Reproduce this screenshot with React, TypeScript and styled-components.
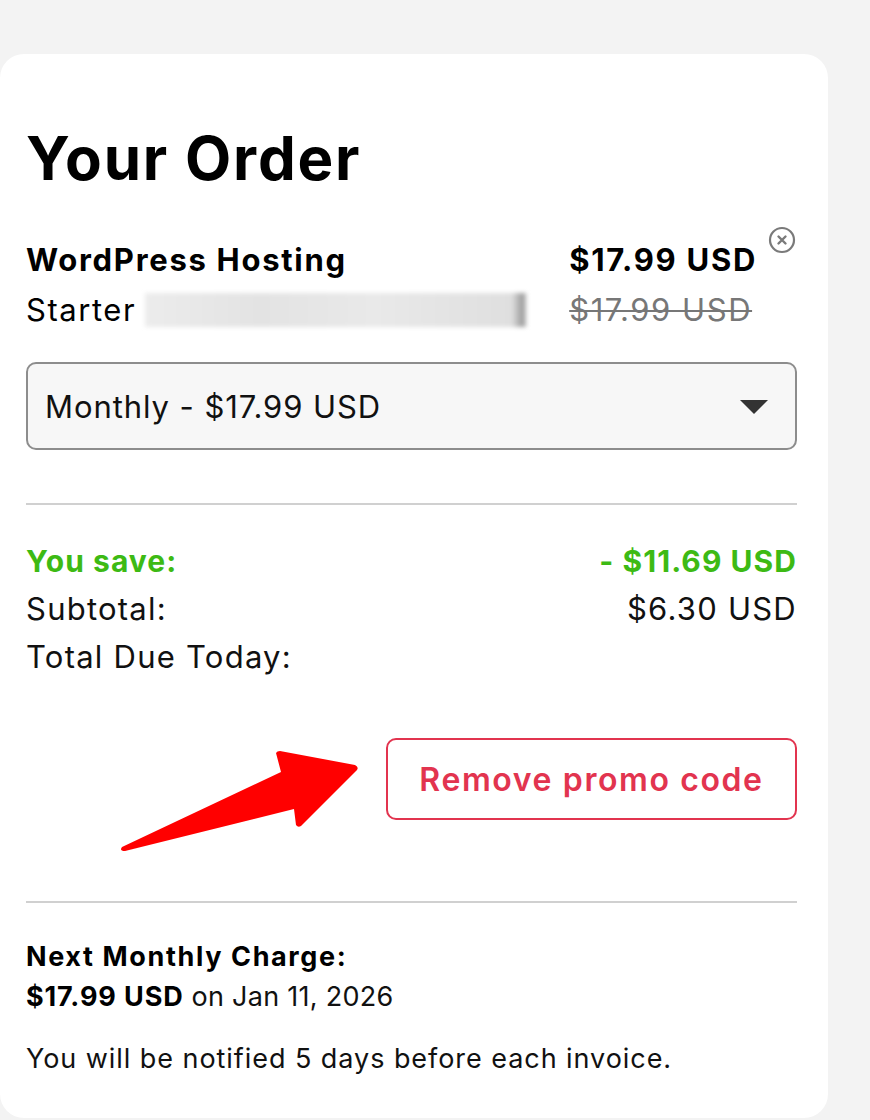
import React from "react";
import styled, { createGlobalStyle } from "styled-components";

const GlobalStyle = createGlobalStyle`
  html, body {
    margin: 0;
    padding: 0;
    background: #f3f3f3;
  }
  body {
    font-family: Inter, "Open Sans", sans-serif;
    color: #111;
    overflow: hidden;
  }
  * { box-sizing: border-box; }
`;

const Page = styled.div`
  width: 870px;
  height: 1120px;
  padding-top: 54px;
  overflow: hidden;
`;

const Card = styled.section`
  position: relative;
  width: 828px;
  height: 1064px;
  background: #ffffff;
  border-radius: 24px;
  padding: 0 31px 0 26px;
`;

const Title = styled.h1`
  margin: 0;
  padding-top: 74px;
  font-size: 60px;
  line-height: 60px;
  font-weight: 700;
  letter-spacing: 0.03em;
  color: #000;
`;

const ItemRow = styled.div`
  display: flex;
  justify-content: space-between;
  align-items: flex-start;
  margin-top: 47px;
`;

const ItemInfo = styled.div`
  display: flex;
  flex-direction: column;
`;

const Line = styled.div<{ $bold?: boolean; $muted?: boolean; $strike?: boolean }>`
  display: flex;
  align-items: center;
  font-size: 31px;
  line-height: 50px;
  height: 50px;
  font-weight: ${(p) => (p.$bold ? 700 : 400)};
  letter-spacing: ${(p) => (p.$bold ? "0.055em" : "0.05em")};
  color: ${(p) => (p.$muted ? "#777" : "#000")};
  text-decoration: ${(p) => (p.$strike ? "line-through" : "none")};
  text-decoration-thickness: 2px;
  white-space: nowrap;
`;

const Redacted = styled.span`
  display: inline-block;
  width: 382px;
  height: 34px;
  margin-left: 9px;
  background: linear-gradient(90deg, #ececec 0%, #e3e3e3 30%, #e9e9e9 60%, #dfdfdf 96%, #9a9a9a 99%, #ececec 100%);
  filter: blur(2px);
`;

const PriceGroup = styled.div`
  display: flex;
  align-items: flex-start;
  gap: 11px;
  margin-top: -9px;
`;

const PriceCol = styled.div`
  display: flex;
  flex-direction: column;
  padding-top: 9px;
`;

const CloseButton = styled.button`
  width: 28px;
  height: 28px;
  padding: 0;
  border: none;
  background: none;
  display: flex;
  align-items: center;
  justify-content: center;
  margin-right: 1px;
`;

const SelectBox = styled.div`
  margin-top: 27px;
  height: 88px;
  border: 2px solid #8d8d8d;
  border-radius: 10px;
  background: #f7f7f7;
  display: flex;
  align-items: center;
  justify-content: space-between;
  padding: 0 27px 0 17px;
  font-size: 31px;
  letter-spacing: 0.03em;
  color: #111;
`;

const Caret = styled.span`
  width: 0;
  height: 0;
  border-left: 14px solid transparent;
  border-right: 14px solid transparent;
  border-top: 14px solid #333;
  margin-top: 2px;
`;

const Divider = styled.hr<{ $top: number }>`
  margin: ${(p) => p.$top}px 0 0;
  border: none;
  height: 2px;
  background: #d0d0d0;
`;

const Summary = styled.div`
  margin-top: 32px;
  display: flex;
  flex-direction: column;
`;

const SummaryRow = styled.div<{ $green?: boolean }>`
  display: flex;
  justify-content: space-between;
  font-size: ${(p) => (p.$green ? 30 : 31)}px;
  line-height: 48px;
  height: 48px;
  letter-spacing: ${(p) => (p.$green ? "0.035em" : "0.04em")};
  font-weight: ${(p) => (p.$green ? 700 : 400)};
  color: ${(p) => (p.$green ? "#3dba14" : "#111")};
`;

const ButtonRow = styled.div`
  display: flex;
  justify-content: flex-end;
  margin-top: 57px;
`;

const PromoButton = styled.button`
  width: 411px;
  height: 82px;
  border: 2px solid #e2344f;
  border-radius: 10px;
  background: #fff;
  color: #e2344f;
  font-family: inherit;
  font-size: 32px;
  font-weight: 600;
  letter-spacing: 0.05em;
  padding: 0;
  cursor: pointer;
`;

const NextBlock = styled.div`
  margin-top: 34px;
  font-size: 27px;
  line-height: 40px;
  letter-spacing: 0.01em;
  color: #111;
`;

const Strong = styled.strong<{ $wide?: boolean }>`
  font-weight: 700;
  color: #000;
  letter-spacing: ${(p) => (p.$wide ? "0.06em" : "0.033em")};
`;

const Note = styled.p`
  margin: 22px 0 0;
  font-size: 27px;
  line-height: 40px;
  letter-spacing: 0.035em;
  color: #111;
`;

const ArrowOverlay = styled.svg`
  position: absolute;
  left: 0;
  top: 0;
  pointer-events: none;
`;

const CloseIcon = () => (
  <svg width="28" height="28" viewBox="0 0 28 28">
    <circle cx="14" cy="14" r="12" fill="none" stroke="#7a7a7a" strokeWidth="2.2" />
    <path d="M10.5 10.5 L17.5 17.5 M17.5 10.5 L10.5 17.5" stroke="#7a7a7a" strokeWidth="2.4" strokeLinecap="round" />
  </svg>
);

export default function App() {
  return (
    <>
      <GlobalStyle />
      <Page>
        <Card>
          <Title>Your Order</Title>
          <ItemRow>
            <ItemInfo>
              <Line $bold>WordPress Hosting</Line>
              <Line>
                Starter
                <Redacted />
              </Line>
            </ItemInfo>
            <PriceGroup>
              <PriceCol>
                <Line $bold>$17.99 USD</Line>
                <Line $muted $strike>$17.99 USD</Line>
              </PriceCol>
              <CloseButton aria-label="Remove item">
                <CloseIcon />
              </CloseButton>
            </PriceGroup>
          </ItemRow>
          <SelectBox>
            <span>Monthly - $17.99 USD</span>
            <Caret />
          </SelectBox>
          <Divider $top={53} />
          <Summary>
            <SummaryRow $green>
              <span>You save:</span>
              <span>- $11.69 USD</span>
            </SummaryRow>
            <SummaryRow>
              <span>Subtotal:</span>
              <span>$6.30 USD</span>
            </SummaryRow>
            <SummaryRow>
              <span>Total Due Today:</span>
              <span></span>
            </SummaryRow>
          </Summary>
          <ButtonRow>
            <PromoButton>Remove promo code</PromoButton>
          </ButtonRow>
          <Divider $top={81} />
          <NextBlock>
            <Strong $wide>Next Monthly Charge:</Strong>
            <br />
            <Strong>$17.99 USD</Strong> on Jan 11, 2026
          </NextBlock>
          <Note>You will be notified 5 days before each invoice.</Note>
          <ArrowOverlay width="828" height="1064" viewBox="0 0 828 1064">
            <path
              d="M122 793 L281 718 L276 699 Q277 697 280 697 L355 711 Q359 713 357 716 L301 772 Q298 774 296 771 L294 755 L125 797 Q119 797 122 793 Z"
              fill="#ff0000"
            />
          </ArrowOverlay>
        </Card>
      </Page>
    </>
  );
}
